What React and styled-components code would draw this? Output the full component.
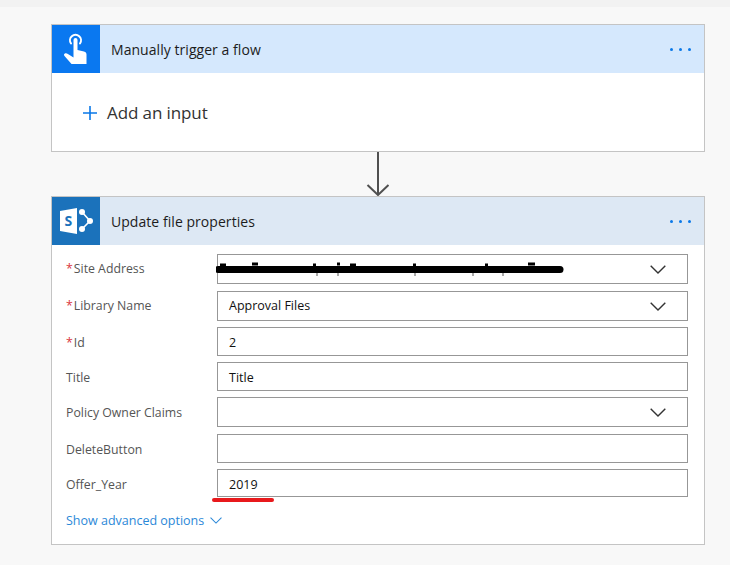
import React from 'react';
import styled, { createGlobalStyle } from 'styled-components';

const GlobalStyle = createGlobalStyle`
  html, body {
    margin: 0;
    padding: 0;
    background: #f8f8f8;
  }
  body {
    font-family: "Open Sans", "Noto Sans", "Liberation Sans", sans-serif;
  }
`;

const Page = styled.div`
  position: relative;
  width: 730px;
  height: 565px;
  overflow: hidden;
  box-sizing: border-box;
  background: #f8f8f8;
  border-top: 7px solid #f2f2f2;
  padding: 17px 25px 0 51px;
`;

const Card = styled.section`
  box-sizing: border-box;
  width: 654px;
  height: ${props => props.height}px;
  background: #fff;
  border: 1px solid #c4c4c4;
`;

const CardHeader = styled.header`
  display: flex;
  align-items: center;
  height: 48px;
  background: ${props => props.tint};
`;

const IconBox = styled.div`
  display: flex;
  align-items: center;
  justify-content: center;
  flex: none;
  width: 48px;
  height: 48px;
  background: ${props => props.color};
`;

const CardTitle = styled.h2`
  flex: 1;
  margin: 1px 0 0 11px;
  font-size: 14px;
  font-weight: 400;
  color: #1c1c1c;
  letter-spacing: 0.05px;
`;

const Dots = styled.div`
  display: flex;
  gap: 6px;
  margin-right: 13px;
`;

const Dot = styled.span`
  width: 3px;
  height: 3px;
  border-radius: 50%;
  background: #0a78e8;
`;

const AddInput = styled.div`
  display: flex;
  align-items: center;
  gap: 9px;
  padding: 28px 0 0 30px;
  font-size: 17px;
  color: #333;
  letter-spacing: -0.1px;
`;

const Connector = styled.div`
  display: flex;
  justify-content: center;
  width: 654px;
  height: 44px;
`;

const Fields = styled.div`
  display: flex;
  flex-direction: column;
  padding-top: 9px;
`;

const Row = styled.div`
  display: grid;
  grid-template-columns: 165px 471px;
  align-items: center;
  height: ${props => props.height}px;
  margin-bottom: ${props => props.gap}px;
`;

const Label = styled.label`
  margin-top: ${props => props.nudge * 2}px;
  padding-left: 14px;
  font-size: 12.3px;
  color: #555;
`;

const Required = styled.span`
  margin-right: 1px;
  color: #d9363e;
`;

const Field = styled.div`
  position: relative;
  display: flex;
  align-items: center;
  justify-content: space-between;
  box-sizing: border-box;
  height: 100%;
  padding: 0 21px 0 11px;
  border: 1px solid #979797;
  font-size: 12.5px;
  color: #111;
`;

const FieldValue = styled.span`
  margin-top: ${props => props.nudge * 2}px;
`;

const Scribble = styled.svg`
  position: absolute;
  left: -2px;
  top: 7px;
`;

const RedMark = styled.span`
  position: absolute;
  left: -6px;
  bottom: -6px;
  width: 62px;
  height: 4px;
  border-radius: 2px;
  background: #e8191c;
`;

const Advanced = styled.div`
  display: flex;
  align-items: center;
  gap: 6px;
  padding: 15px 0 0 14px;
  font-size: 12.5px;
  color: #2b88d8;
`;

const TouchIcon = () => (
  <svg width="26" height="34" viewBox="0 0 26 34" fill="none">
    <path d="M8 11.5a5.5 5.5 0 1 1 9 0" stroke="#fff" strokeWidth="2" strokeLinecap="round" />
    <path
      d="M10.5 8a2 2 0 0 1 4 0v10l6.5 1.6c1.6.4 2.5 1.4 2.5 3V32H8.5L1.500 24c-.8-1-.6-2 .4-2.4 1-.5 2-.2 3 .5l5.6 3.4z"
      fill="#fff"
    />
  </svg>
);

const SharePointIcon = () => (
  <svg width="34" height="26" viewBox="0 0 34 26">
    <path d="M1 3 18 0v26L1 23z" fill="#fff" />
    <text x="5.5" y="18" fontSize="14" fontWeight="700" fontFamily="Open Sans, sans-serif" fill="#1b72bb">S</text>
    <path d="M23 4 31 13 23 21" fill="none" stroke="#fff" strokeWidth="1.6" />
    <circle cx="23" cy="4" r="3" fill="#fff" />
    <circle cx="31" cy="13" r="3" fill="#fff" />
    <circle cx="23" cy="21" r="3" fill="#fff" />
  </svg>
);

const Plus = () => (
  <svg width="16" height="16" viewBox="0 0 16 16">
    <path d="M8 1v14M1 8h14" stroke="#0a78e8" strokeWidth="1.6" />
  </svg>
);

const DownArrow = () => (
  <svg width="24" height="44" viewBox="0 0 24 44" fill="none">
    <path d="M12 0v43M1.5 33 12 43l10.5-10" stroke="#505050" strokeWidth="2" />
  </svg>
);

const Chevron = ({ size = 16, color = '#333' }) => (
  <svg width={size} height={size / 2 + 1} viewBox="0 0 16 9" fill="none">
    <path d="M.7.7 8 8 15.3.7" stroke={color} strokeWidth="1.4" />
  </svg>
);

const Redaction = () => (
  <Scribble width="350" height="16" viewBox="0 0 350 16">
    <path d="M2 7.5h342" stroke="#000" strokeWidth="7" strokeLinecap="round" />
    <path d="M4 3h6M36 2h6M97 3h3M121 2h3M134 3h6M197 3h3M269 3h3M312 2h7" stroke="#000" strokeWidth="3" />
    <path d="M101 11v3M122 11v3M199 11v3M257 11v3M287 11v3" stroke="#555" strokeWidth="1" />
  </Scribble>
);

const rows = [
  { label: 'Site Address', required: true, select: true, redacted: true, height: 30, gap: 7, nudge: -1 },
  { label: 'Library Name', required: true, select: true, value: 'Approval Files', height: 30, gap: 6, nudge: -1 },
  { label: 'Id', required: true, value: '2', height: 29, gap: 6, nudge: 1 },
  { label: 'Title', value: 'Title', height: 29, gap: 6, nudge: 1 },
  { label: 'Policy Owner Claims', select: true, height: 30, gap: 7, nudge: 0 },
  { label: 'DeleteButton', height: 29, gap: 6, nudge: 1 },
  { label: 'Offer_Year', value: '2019', marked: true, height: 28, gap: 0, nudge: 1 },
];

const App = () => (
  <Page>
    <GlobalStyle />
    <Card height={128}>
      <CardHeader tint="#d5e8fd">
        <IconBox color="#0a78f0"><TouchIcon /></IconBox>
        <CardTitle>Manually trigger a flow</CardTitle>
        <Dots><Dot /><Dot /><Dot /></Dots>
      </CardHeader>
      <AddInput><Plus />Add an input</AddInput>
    </Card>
    <Connector><DownArrow /></Connector>
    <Card height={349}>
      <CardHeader tint="#dde8f4">
        <IconBox color="#1b72bb"><SharePointIcon /></IconBox>
        <CardTitle>Update file properties</CardTitle>
        <Dots><Dot /><Dot /><Dot /></Dots>
      </CardHeader>
      <Fields>
        {rows.map(row => (
          <Row key={row.label} height={row.height} gap={row.gap}>
            <Label nudge={row.nudge}>{row.required && <Required>*</Required>}{row.label}</Label>
            <Field>
              <FieldValue nudge={row.nudge}>{row.value}</FieldValue>
              {row.select && <Chevron />}
              {row.redacted && <Redaction />}
              {row.marked && <RedMark />}
            </Field>
          </Row>
        ))}
      </Fields>
      <Advanced>Show advanced options <Chevron size={12} color="#2b88d8" /></Advanced>
    </Card>
  </Page>
);

export default App;
